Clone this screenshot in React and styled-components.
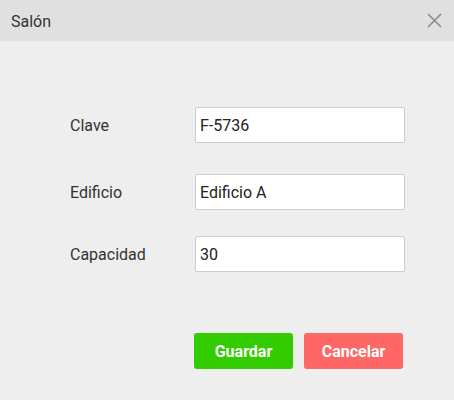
import React from "react";
import styled, { createGlobalStyle } from "styled-components";

const Global = createGlobalStyle`
  html, body { margin: 0; padding: 0; background: #eeeeee; }
  body { font-family: Roboto, "Liberation Sans", sans-serif; }
`;

const Dialog = styled.div`
  width: 454px;
  height: 400px;
  background: #eeeeee;
  display: flex;
  flex-direction: column;
`;

const Header = styled.div`
  height: 42px;
  box-sizing: border-box;
  background: #e0e0e0;
  border-bottom: 1px solid #e8e8e8;
  display: flex;
  align-items: center;
  justify-content: space-between;
  padding: 0 12px 0 11px;
`;

const Title = styled.div`
  font-size: 16px;
  color: #333333;
  margin-top: 1px;
`;

const Close = styled.button`
  border: none;
  background: none;
  padding: 0;
  width: 16px;
  height: 16px;
  display: flex;
  align-items: center;
  justify-content: center;
  cursor: pointer;
`;

const Form = styled.div`
  display: flex;
  flex-direction: column;
  padding: 65px 49px 0 70px;
`;

const Row = styled.div`
  display: flex;
  align-items: center;
  margin-top: ${(p) => p.$mt || 0}px;
`;

const Label = styled.label`
  width: 125px;
  font-size: 16px;
  color: #333333;
`;

const Input = styled.input`
  width: 210px;
  height: 36px;
  box-sizing: border-box;
  border: 1px solid #cccccc;
  border-radius: 2px;
  background: #ffffff;
  font-family: Roboto, "Liberation Sans", sans-serif;
  font-size: 16px;
  color: #222222;
  padding: 0 4px;
  outline: none;
`;

const Actions = styled.div`
  display: flex;
  justify-content: flex-end;
  gap: 11px;
  padding: 61px 51px 0 0;
`;

const Button = styled.button`
  width: 99px;
  height: 36px;
  border: none;
  border-radius: 3px;
  background: ${(p) => p.$bg};
  color: #ffffff;
  font-family: Roboto, "Liberation Sans", sans-serif;
  font-weight: bold;
  font-size: 16px;
  cursor: pointer;
`;

export default function App() {
  return (
    <>
      <Global />
      <Dialog>
        <Header>
          <Title>Salón</Title>
          <Close aria-label="Cerrar">
            <svg width="15" height="15" viewBox="0 0 15 15">
              <path d="M1 1 L14 14 M14 1 L1 14" stroke="#8a8a8a" strokeWidth="1.6" />
            </svg>
          </Close>
        </Header>
        <Form>
          <Row>
            <Label>Clave</Label>
            <Input defaultValue="F-5736" />
          </Row>
          <Row $mt={31}>
            <Label>Edificio</Label>
            <Input defaultValue="Edificio A" />
          </Row>
          <Row $mt={26}>
            <Label>Capacidad</Label>
            <Input defaultValue="30" />
          </Row>
        </Form>
        <Actions>
          <Button $bg="#33cc00">Guardar</Button>
          <Button $bg="#ff6666">Cancelar</Button>
        </Actions>
      </Dialog>
    </>
  );
}
